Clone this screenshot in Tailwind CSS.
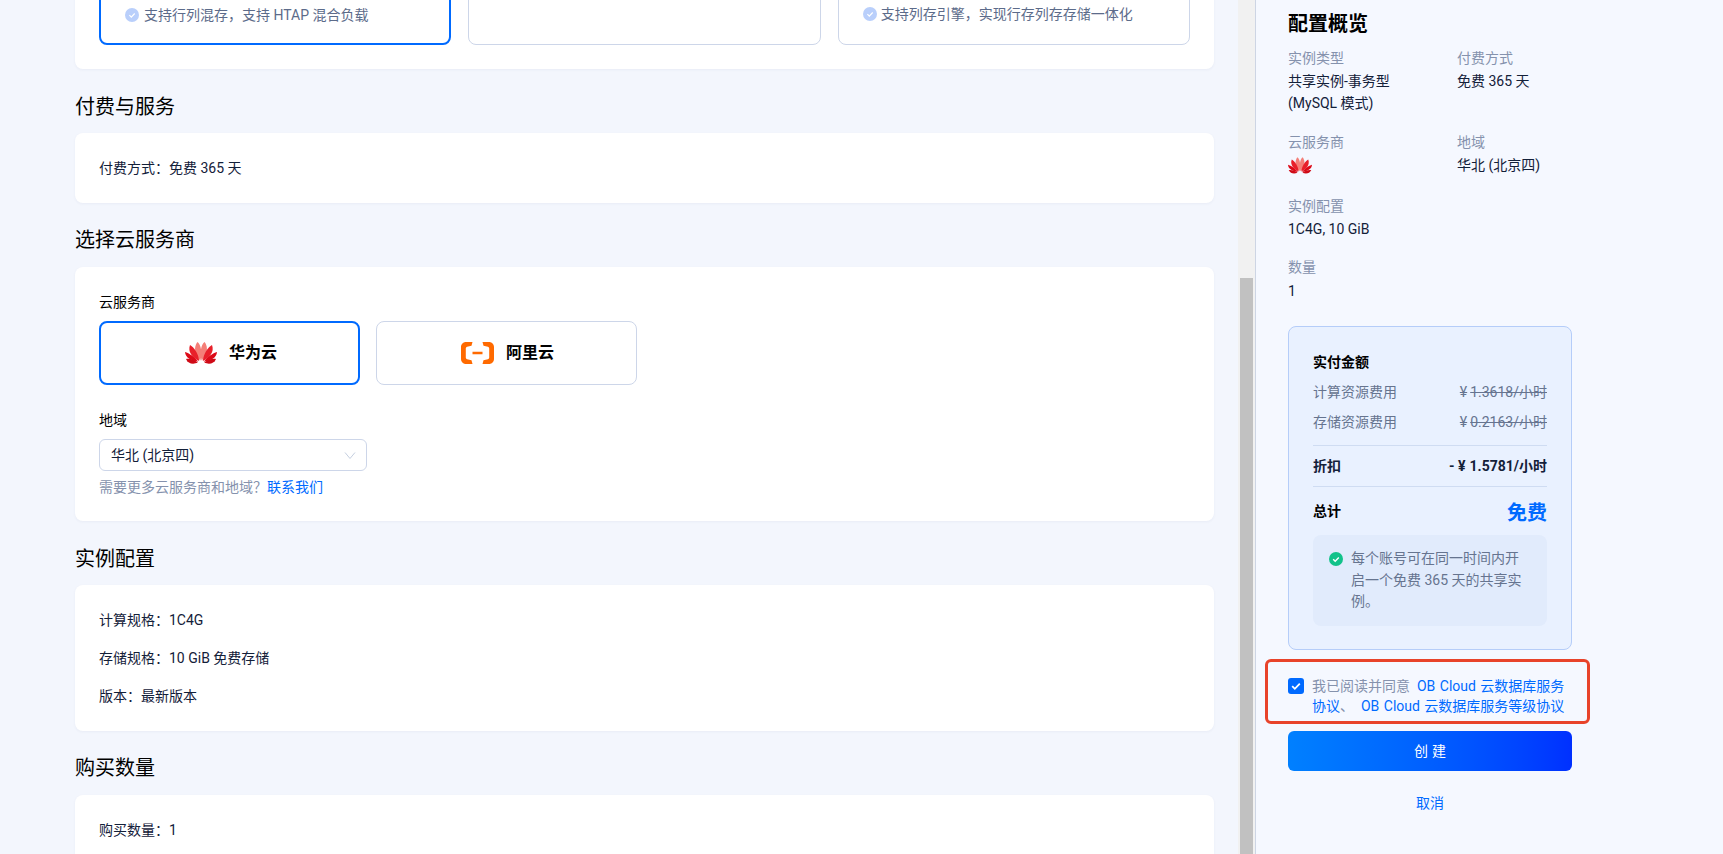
<!DOCTYPE html>
<html lang="zh-CN">
<head>
    <meta charset="UTF-8">
    <title>创建实例</title>
    <script src="https://cdn.jsdelivr.net/npm/@tailwindcss/browser@4"></script>
</head>
<body class="h-[854px] overflow-hidden bg-[#f3f6fd] font-['Roboto','Noto_Sans_CJK_SC',sans-serif] text-[14px] text-[#132039]">
    <svg width="0" height="0" class="absolute">
        <defs>
            <g id="huawei">
                <g id="huawei-half">
                    <path fill="#f47f78" d="M15.4 18.500C9.600 13.600 8.400 5.600 12.300 0C16 1.800 17.400 11.400 15.400 18.500Z"/>
                    <path fill="#e8202a" d="M14.200 19C7.400 15.800 2.400 9.800 5 3C8.800 4.800 13.600 12 14.200 19Z"/>
                    <path fill="#dd0a18" d="M13.200 19.800C6.800 18.800 .2 15.800 0 10C4 11 10.200 15.400 13.200 19.800Z"/>
                    <path fill="#cf0a16" d="M12.800 20.800C8 22.400 3 22 1 17C5 16.400 9.800 18 12.800 20.800Z"/>
                </g>
                <use href="#huawei-half" transform="matrix(-1 0 0 1 32 0)"/>
            </g>
        </defs>
    </svg>

    <div class="flex h-[854px]">
        <!-- Main form -->
        <div class="w-[1238px] overflow-hidden pl-[75px] pr-[24px]">
            <div class="-mt-[100px] h-[169px] rounded-lg bg-white px-6 pt-[69px] shadow-[0_1px_3px_rgba(30,60,120,0.05)]">
                <div class="grid grid-cols-3 gap-[17px]">
                    <div class="flex h-[76px] items-end rounded-lg border-2 border-[#006aff] pb-[18px] pl-6 text-[#5c6b8a]">
                        <svg class="mr-[5px] mb-[3px] h-[14px] w-[14px]" viewBox="0 0 14 14"><circle cx="7" cy="7" r="7" fill="#b9cffb"/><path d="M4.4 7.2l1.9 1.9 3.4-3.6" fill="none" stroke="#fff" stroke-width="1.2"/></svg>
                        <span class="leading-[20px]">支持行列混存，支持 HTAP 混合负载</span>
                    </div>
                    <div class="h-[76px] rounded-lg border border-[#cdd6e9]"></div>
                    <div class="flex h-[76px] items-end rounded-lg border border-[#cdd6e9] pb-[20px] pl-6 text-[#5c6b8a]">
                        <svg class="mr-[4px] mb-[3px] h-[14px] w-[14px]" viewBox="0 0 14 14"><circle cx="7" cy="7" r="7" fill="#b9cffb"/><path d="M4.4 7.2l1.9 1.9 3.4-3.6" fill="none" stroke="#fff" stroke-width="1.2"/></svg>
                        <span class="leading-[20px]">支持列存引擎，实现行存列存存储一体化</span>
                    </div>
                </div>
            </div>

            <h2 class="mt-[24px] text-[20px] leading-[28px] text-black">付费与服务</h2>
            <div class="mt-[12px] flex h-[70px] items-center rounded-lg bg-white px-6 shadow-[0_1px_3px_rgba(30,60,120,0.05)]">付费方式：免费 365 天</div>

            <h2 class="mt-[23px] text-[20px] leading-[28px] text-black">选择云服务商</h2>
            <div class="mt-[13px] h-[254px] rounded-lg bg-white px-6 pt-[25px] shadow-[0_1px_3px_rgba(30,60,120,0.05)]">
                <div class="leading-[20px] text-black">云服务商</div>
                <div class="mt-[9px] flex gap-[16px]">
                    <div class="flex h-[64px] w-[261px] items-center justify-center gap-[12px] rounded-lg border-2 border-[#006aff] pl-[3px] font-bold text-black">
                        <svg class="h-[22px] w-[32px]" viewBox="0 0 32 22"><use href="#huawei"/></svg>
                        <span class="text-[16px]">华为云</span>
                    </div>
                    <div class="flex h-[64px] w-[261px] items-center justify-center gap-[12px] rounded-lg border border-[#cdd6e9] pl-[2px] font-bold text-black">
                        <svg class="h-[22px] w-[33px]" viewBox="0 0 33 22"><path fill="#ff6a00" d="M11.500 0H5C2.200 0 0 2.200 0 5v12c0 2.800 2.200 5 5 5h6.500l-1-3.800-4.400-1c-.800-.200-1.300-.900-1.300-1.700V6.500c0-.800.500-1.500 1.300-1.700l4.400-1zM21.500 0H28c2.800 0 5 2.200 5 5v12c0 2.800-2.200 5-5 5h-6.500l1-3.800 4.400-1c.800-.200 1.300-.900 1.300-1.700V6.500c0-.800-.500-1.500-1.300-1.700l-4.400-1zM11.500 9.800h10v2.400h-10z"/></svg>
                        <span class="text-[16px]">阿里云</span>
                    </div>
                </div>
                <div class="mt-[25px] leading-[20px] text-black">地域</div>
                <div class="mt-[9px] flex h-[32px] w-[268px] items-center justify-between rounded-md border border-[#cdd6e9] pr-[10px] pl-[11px]">
                    <span>华北 (北京四)</span>
                    <svg class="h-[12px] w-[12px]" viewBox="0 0 12 12"><path d="M1 3.500l5 6 5-6" fill="none" stroke="#c5cfe0" stroke-width="1"/></svg>
                </div>
                <div class="mt-[6px] leading-[20px] text-[#8592ad]">需要更多云服务商和地域？<span class="text-[#006aff]">联系我们</span></div>
            </div>

            <h2 class="mt-[24px] text-[20px] leading-[28px] text-black">实例配置</h2>
            <div class="mt-[12px] flex h-[146px] flex-col justify-between rounded-lg bg-white px-6 pt-[25px] pb-[25px] shadow-[0_1px_3px_rgba(30,60,120,0.05)]">
                <div class="leading-[20px]">计算规格：1C4G</div>
                <div class="leading-[20px]">存储规格：10 GiB 免费存储</div>
                <div class="leading-[20px]">版本：最新版本</div>
            </div>

            <h2 class="mt-[23px] text-[20px] leading-[28px] text-black">购买数量</h2>
            <div class="mt-[13px] h-[120px] rounded-lg bg-white px-6 pt-[25px] leading-[20px] shadow-[0_1px_3px_rgba(30,60,120,0.05)]">购买数量：1</div>
        </div>

        <!-- Scrollbar -->
        <div class="w-[17px] bg-[#f1f1f1] px-[2px] pt-[278px]">
            <div class="h-full bg-[#c1c1c1]"></div>
        </div>

        <!-- Summary panel -->
        <div class="w-[468px] border-l border-[#cdd5e4] bg-[#f5f8ff] pt-[10px] pl-[32px]">
            <h3 class="text-[20px] leading-[28px] font-bold text-black">配置概览</h3>
            <div class="mt-[10px] grid w-[340px] grid-cols-[169px_1fr]">
                <div>
                    <div class="leading-[20px] text-[#8592ad]">实例类型</div>
                    <div class="mt-[2px] leading-[22px]">共享实例-事务型<br>(MySQL 模式)</div>
                </div>
                <div>
                    <div class="leading-[20px] text-[#8592ad]">付费方式</div>
                    <div class="mt-[2px] leading-[22px]">免费 365 天</div>
                </div>
                <div class="mt-[18px]">
                    <div class="leading-[20px] text-[#8592ad]">云服务商</div>
                    <svg class="mt-[5px] h-[17px] w-[24px]" viewBox="0 0 32 22"><use href="#huawei"/></svg>
                </div>
                <div class="mt-[18px]">
                    <div class="leading-[20px] text-[#8592ad]">地域</div>
                    <div class="mt-[2px] leading-[22px]">华北 (北京四)</div>
                </div>
            </div>
            <div class="mt-[20px] leading-[20px] text-[#8592ad]">实例配置</div>
            <div class="mt-[2px] leading-[22px]">1C4G, 10 GiB</div>
            <div class="mt-[17px] leading-[20px] text-[#8592ad]">数量</div>
            <div class="mt-[3px] leading-[22px]">1</div>

            <!-- Price card -->
            <div class="mt-[24px] h-[324px] w-[284px] rounded-lg border border-[#b5cdf9] bg-[#e9f1ff] px-6 pt-[25px]">
                <div class="leading-[20px] font-bold text-black">实付金额</div>
                <div class="mt-[10px] flex justify-between leading-[20px] text-[#66748f]"><span>计算资源费用</span><span class="line-through">¥<span class="ml-[3px]">1.3618/小时</span></span></div>
                <div class="mt-[10px] flex justify-between leading-[20px] text-[#66748f]"><span>存储资源费用</span><span class="line-through">¥<span class="ml-[3px]">0.2163/小时</span></span></div>
                <div class="mt-[13px] border-t border-[#cfdcf2] pt-[10px] pb-[10px]">
                    <div class="flex justify-between leading-[20px] font-bold"><span>折扣</span><span>- ¥<span class="ml-[4px]">1.5781/小时</span></span></div>
                </div>
                <div class="flex items-center justify-between border-t border-[#cfdcf2] pt-[10px] pb-[10px] font-bold">
                    <span class="text-black">总计</span>
                    <span class="relative top-[2px] text-[20px] leading-[28px] text-[#006aff]">免费</span>
                </div>
                <div class="flex h-[91px] gap-[8px] rounded-lg bg-[#e1ebfc] pt-[13px] pl-[16px] text-[#66748f]">
                    <svg class="mt-[4px] h-[14px] w-[14px] shrink-0" viewBox="0 0 14 14"><circle cx="7" cy="7" r="7" fill="#12c28a"/><path d="M4.200 7.200l2 2 3.600-3.800" fill="none" stroke="#fff" stroke-width="1.400"/></svg>
                    <div class="leading-[21.500px]">每个账号可在同一时间内开<br>启一个免费 365 天的共享实<br>例。</div>
                </div>
            </div>

            <!-- Agreement -->
            <div class="relative mt-[26px] flex w-[284px] items-start gap-[8px]">
                <div class="absolute -top-[17px] -left-[23px] h-[65px] w-[325px] rounded-[6px] border-[3px] border-[#e8432a]"></div>
                <div class="mt-[2px] flex h-[16px] w-[16px] shrink-0 items-center justify-center rounded-[3px] bg-[#006aff]">
                    <svg class="h-[10px] w-[10px]" viewBox="0 0 10 10"><path d="M1.200 5.200l2.600 2.600 5-5.200" fill="none" stroke="#fff" stroke-width="1.800"/></svg>
                </div>
                <div class="whitespace-nowrap leading-[20px] text-[#8592ad]">我已阅读并同意&nbsp; <span class="text-[#006aff] [word-spacing:1px]">OB Cloud 云数据库服务<br>协议</span>、&nbsp; <span class="text-[#006aff] [word-spacing:1px]">OB Cloud 云数据库服务等级协议</span></div>
            </div>

            <div class="mt-[15px] flex h-[40px] w-[284px] items-center justify-center rounded-md bg-gradient-to-r from-[#0080ff] to-[#0030ff] pl-[4px] tracking-[4px] text-white">创建</div>
            <div class="mt-[22px] w-[284px] text-center leading-[20px] text-[#006aff]">取消</div>
        </div>
    </div>
</body>
</html>
